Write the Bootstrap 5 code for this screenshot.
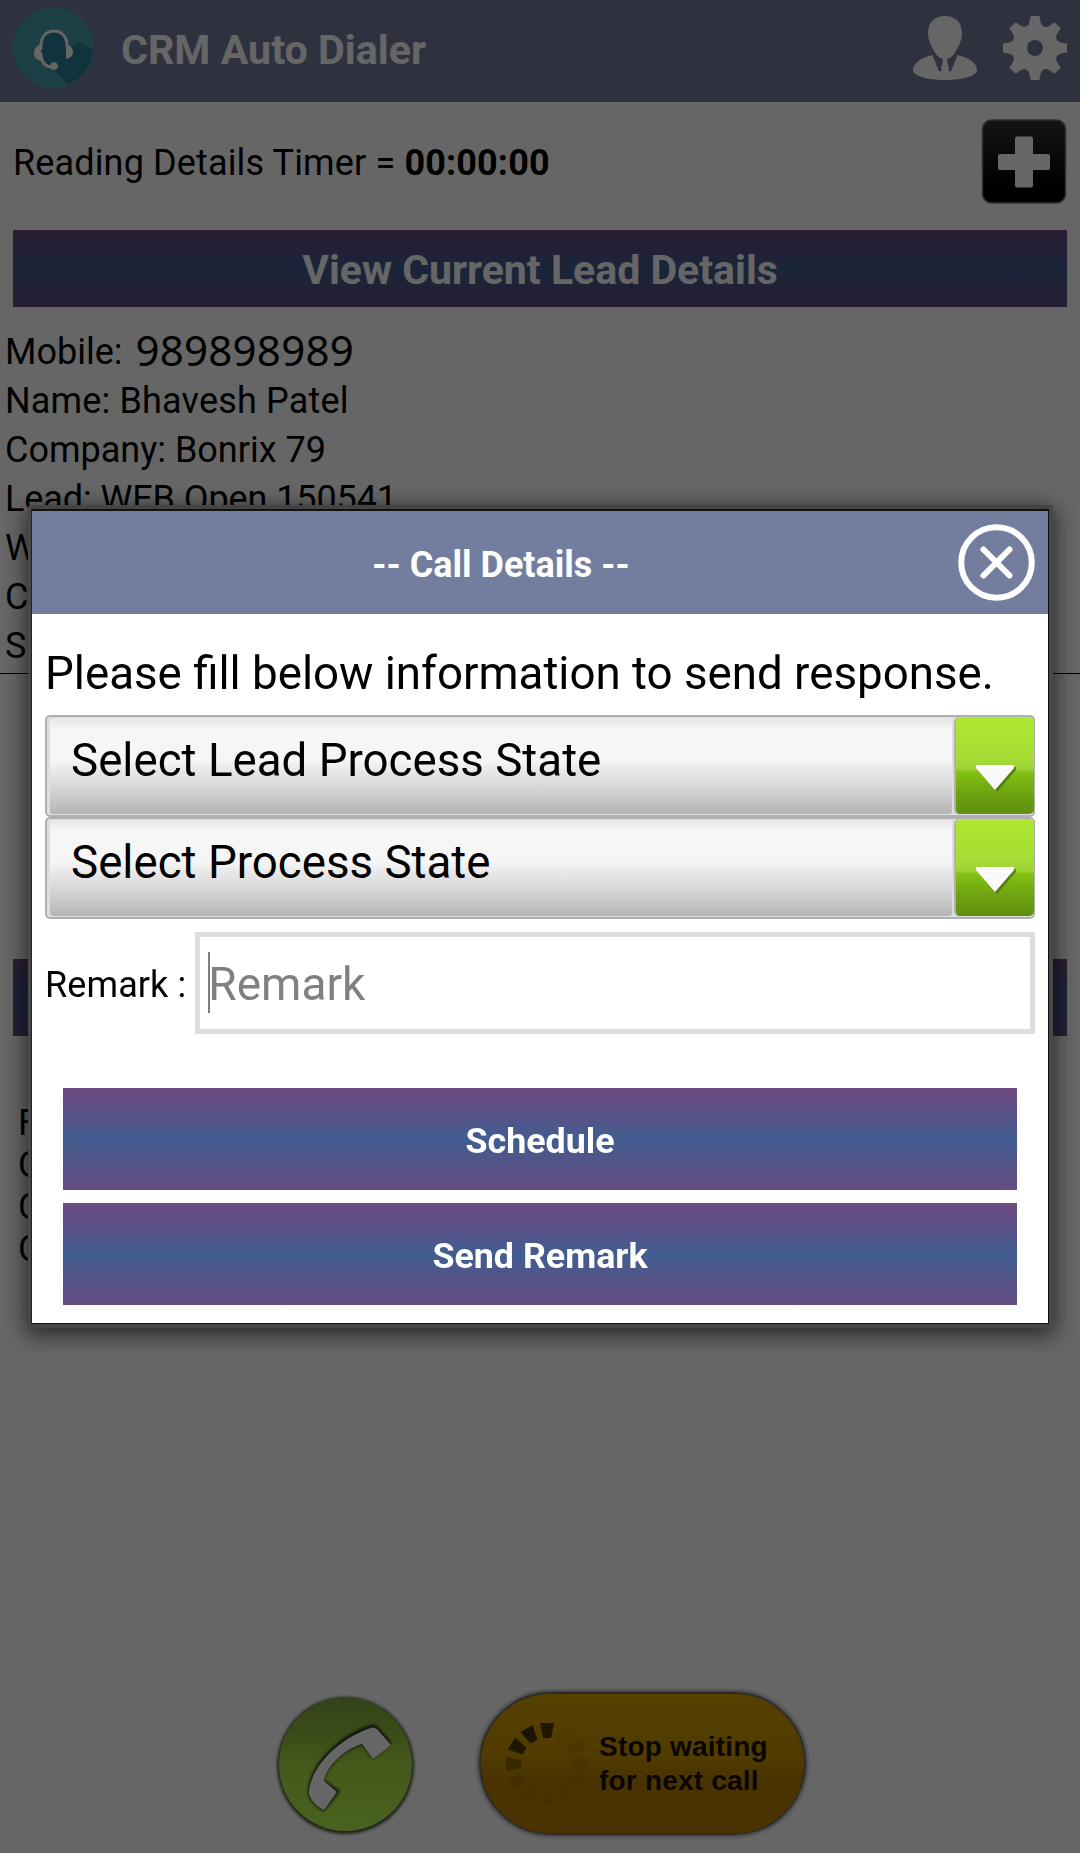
<!DOCTYPE html>
<html lang="en">
<head>
<meta charset="utf-8">
<meta name="viewport" content="width=device-width, initial-scale=1">
<title>CRM Auto Dialer</title>
<link href="https://cdn.jsdelivr.net/npm/bootstrap@5.3.0/dist/css/bootstrap.min.css" rel="stylesheet">
<style>
  body { font-family: Roboto, "Noto Sans", sans-serif; color: #000; background: #fff; height: 1853px; overflow: hidden; font-size: 36px; }
  .screen { height: 1853px; }
  .topbar { height: 102px; background: #737e9f; padding: 0 13px 7px; }
  .app-title { font-size: 41.2px; font-weight: 700; color: #fff; margin-left: 26px; line-height: 88px; padding-top: 4px; }
  .top-icons { gap: 26px; }
  .timer-row { height: 128px; padding: 0 13px 0 13px; }
  .timer-text { padding-bottom: 7px; letter-spacing: .14px; }
  .plus-icon { margin-bottom: 11px; }
  .grad-btn { background: linear-gradient(#6e4b80, #585187 25%, #415d90 50%, #555387 76%, #654e82); border-radius: 0; border: 0; color: #fff; font-weight: 700; }
  .wide-btn { height: 77px; margin: 0 13px; font-size: 41px; line-height: 77px; padding: 2px 0 0; }
  .lead-list { padding: 21px 0 0 5px; height: 367px; border-bottom: 1px solid #000; line-height: 49px; }
  .mobile-no { font-family: "Noto Sans", sans-serif; font-size: 42px; line-height: 40px; margin: -5px 0 0 13px; letter-spacing: .25px; }
  .airy { letter-spacing: .16px; }
  .tight { letter-spacing: -.1px; }
  .second-btn { margin-top: 285px; }
  .stats { padding: 66px 0 0 18px; line-height: 42px; }
  .bottom-bar { margin-top: auto; height: 165px; padding-left: 274px; gap: 61px; }
  .wait-btn { font-family: "Liberation Sans", Arial, sans-serif; font-weight: 700; font-size: 28px; line-height: 34px; width: 327px; height: 143px; margin-top: 4px; border-radius: 72px; border: 2px solid #716e64; background: linear-gradient(#d8a200 0%, #c99400 45%, #b88000 62%, #b88000); box-shadow: 0 0 5px #444; color: #1a1200; padding: 0 0 0 23px; gap: 9px; letter-spacing: .2px; }
  .modal-backdrop.dim { opacity: .6; }
  .modal-dialog.calldlg { max-width: 1025px; width: 1025px; margin: 505px 0 0 28px; }
  .calldlg .modal-content { border: 4px solid #484848; border-top-color: #444; border-radius: 3px; box-shadow: 0 5px 22px 2px rgba(0,0,0,.62); background: #fff; color: #000; }
  .dlg-inner { border: 1px solid #111; border-top-width: 2px; border-left-width: 0; box-shadow: -1px 0 0 #222; }
  .calldlg .modal-header { height: 103px; background: #737e9e; border: 0; border-radius: 0; padding: 0 13px 1px 12px; color: #fff; }
  .calldlg .modal-title { font-size: 36px; font-weight: 700; line-height: 60px; padding-top: 6px; }
  .calldlg .modal-body { padding: 25px 13px 18px; height: 709px; }
  .prompt { font-size: 45.7px; line-height: 69px; margin-bottom: 7px; }
  .spinner-box { height: 102px; font-size: 45.7px; border: 2px solid #b0b0b0; border-radius: 5px; background: #dedede; padding: 1px 0 1px 3px; }
  .spin-label { background: linear-gradient(#e6e6e6 0, #f6f6f6 12%, #f6f6f6 43%, #e8e8e8 55%, #d6d6d6 72%, #c6c6c6 86%, #b4b4b4); border-radius: 3px; padding: 0 0 9px 21px; margin-right: 2px; }
  .spin-arrow { width: 80px; margin: -1px -1px 0 0; border-left: 2px solid #b0b0b0; border-radius: 5px; background: linear-gradient(#afe82f 0, #a6dd35 40%, #9fd238 53%, #82c012 57%, #6fa411 78%, #5f8f0e); padding: 47px 0 0 19px; }
  .remark-row { margin-top: 13px; height: 102px; gap: 9px; }
  .remark-label { padding-top: 4px; letter-spacing: .1px; }
  .remark-box { border: 5px solid #ddd; padding: 3px 8px 0; font-size: 46px; color: #808080; }
  .caret { width: 2px; height: 61px; background: #808080; margin: -5px -2px 0 0; }
  .action-btn { height: 102px; font-size: 35.8px; line-height: 102px; padding: 2px 0 0; }
  .actions { margin: 54px 18px 0; gap: 13px; }
</style>
</head>
<body>
<div class="screen d-flex flex-column">
  <header class="topbar d-flex align-items-center">
    <svg width="82" height="82" viewBox="0 0 82 82">
      <circle cx="40.500" cy="41" r="40.500" fill="#48a0ac"/>
      <path d="M67 35 80 43A40.500 40.500 0 0 1 55 78L41 63 32 54Z" fill="#2c809c"/>
      <path d="M29 50V38c0-8 5-13 12-13s12 5 12 13v12l-12 10z" fill="#2c809c"/>
      <path d="M28 42v-3c0-9 5-15 13-15s13 6 13 15v3M28 46c0 9 4 14 12 14" fill="none" stroke="#fff" stroke-width="2.800"/>
      <path d="M28 37v17c-5-1-7-4-7-8s3-8 7-9zM53 37v15c4-1 7-3 7-7s-3-7-7-8z" fill="#fff"/>
      <circle cx="41" cy="59" r="3.800" fill="#fff"/>
    </svg>
    <div class="app-title">CRM Auto Dialer</div>
    <div class="top-icons d-flex ms-auto">
      <svg width="64" height="64" viewBox="0 0 64 64" fill="#fff">
        <path d="M32 0c11 0 17 7 17 17 0 9-5 16-8 21-2 3-5 5-9 5s-7-2-9-5c-3-5-8-12-8-21C15 7 21 0 32 0z"/>
        <path d="M20 39 27 55 30 45 29 42h6l-1 3 3 10 7-16c11 2 20 8 20 15 0 6-14 10-32 10S0 60 0 54c0-7 9-13 20-15z"/>
        <path d="M21 39l6.500 16M43 39l-6.500 16" stroke="#737e9f" stroke-width="3"/>
      </svg>
      <svg width="64" height="64" viewBox="-32 -32 64 64">
        <g fill="#fff">
          <circle r="23.500"/>
          <path id="cog" d="M-8-21Q-5-25-4.500-32h9Q5-25 8-21V21Q5 25 4.500 32h-9Q-5 25-8 21z"/>
          <use href="#cog" transform="rotate(45)"/><use href="#cog" transform="rotate(90)"/><use href="#cog" transform="rotate(135)"/>
        </g>
        <circle r="8" fill="#737e9f"/>
      </svg>
    </div>
  </header>
  <div class="timer-row d-flex align-items-center justify-content-between">
    <div class="timer-text">Reading Details Timer = <b>00:00:00</b></div>
    <svg class="plus-icon" width="86" height="86" viewBox="0 0 86 86">
      <defs><linearGradient id="pg" x2="0" y2="1"><stop offset="0" stop-color="#333"/><stop offset=".7" stop-color="#060606"/><stop offset="1" stop-color="#000"/></linearGradient></defs>
      <rect x="1.500" y="2" width="83" height="83" rx="9" fill="url(#pg)" stroke="#777" stroke-width="1.500"/>
      <path d="M36 18.500h14a2 2 0 0 1 2 2V36h15a2 2 0 0 1 2 2v12a2 2 0 0 1-2 2H52v15.500a2 2 0 0 1-2 2H36a2 2 0 0 1-2-2V52H19a2 2 0 0 1-2-2V38a2 2 0 0 1 2-2h15V20.500a2 2 0 0 1 2-2z" fill="#fff"/>
    </svg>
  </div>
  <button class="btn grad-btn wide-btn">View Current Lead Details</button>
  <div class="lead-list">
    <div class="d-flex align-items-center">Mobile: <span class="mobile-no">989898989</span></div>
    <div class="airy">Name: Bhavesh Patel</div>
    <div>Company: Bonrix 79</div>
    <div class="tight">Lead: WEB Open 150541</div>
    <div>W</div>
    <div>C</div>
    <div>S</div>
  </div>
  <div class="btn grad-btn wide-btn second-btn"></div>
  <div class="stats">
    <div>F</div>
    <div>C</div>
    <div>C</div>
    <div>C</div>
  </div>
  <div class="bottom-bar d-flex">
    <svg width="144" height="150" viewBox="0 0 144 150">
      <defs>
        <linearGradient id="cg" x2="0" y2="1"><stop offset="0" stop-color="#80a93e"/><stop offset=".25" stop-color="#90bd3f"/><stop offset=".5" stop-color="#aadf42"/><stop offset="1" stop-color="#b8f552"/></linearGradient>
        <filter id="soft" x="-10%" y="-10%" width="120%" height="120%"><feGaussianBlur stdDeviation="1.500"/></filter>
      </defs>
      <circle cx="71.500" cy="77.500" r="68.500" fill="#4c5a38" filter="url(#soft)"/>
      <circle cx="71.500" cy="76.500" r="66.500" fill="url(#cg)"/>
      <path d="M97 37C99 36 101 37 103 38L118 55 99 71 88 57C70 62 53 79 50 92L66 103 50 123C43 120 37 114 34 107 33 77 66 46 97 37z" fill="#222b12" filter="url(#soft)"/>
      <path d="M97 40C99 39 101 40 103 41L117 57 99 71 88 56C70 61 52 79 50 93L63 104 50 122C43 119 37 113 35 106 35 79 67 49 97 40z" fill="#fff"/>
    </svg>
    <button class="wait-btn d-flex align-items-center text-start">
      <svg width="86" height="86" viewBox="-43 -43 86 86" fill="#241800">
        <defs><path id="seg" d="M-7-41H7L4-26H-4z"/></defs>
        <use href="#seg" opacity=".75"/>
        <use href="#seg" transform="rotate(-30)" opacity=".8"/>
        <use href="#seg" transform="rotate(-60)" opacity=".75"/>
        <use href="#seg" transform="rotate(-90)" opacity=".35"/>
        <use href="#seg" transform="rotate(-120)" opacity=".1"/>
        <use href="#seg" transform="rotate(-150)" opacity=".06"/>
        <use href="#seg" transform="rotate(180)" opacity=".07"/>
        <use href="#seg" transform="rotate(150)" opacity=".07"/>
        <use href="#seg" transform="rotate(120)" opacity=".07"/>
        <use href="#seg" transform="rotate(90)" opacity=".09"/>
        <use href="#seg" transform="rotate(60)" opacity=".09"/>
        <use href="#seg" transform="rotate(30)" opacity=".04"/>
      </svg>
      <span>Stop waiting<br>for next call</span>
    </button>
  </div>
</div>

<div class="modal-backdrop dim"></div>
<div class="modal d-block" tabindex="-1">
  <div class="modal-dialog calldlg">
    <div class="modal-content">
      <div class="dlg-inner">
        <div class="modal-header">
          <div class="modal-title flex-grow-1 text-center">-- Call Details --</div>
          <svg width="77" height="77" viewBox="0 0 77 77" fill="none" stroke="#fff" stroke-width="6" stroke-linecap="round">
            <circle cx="38.500" cy="38.500" r="35.300"/>
            <path d="M25.500 25.500 51.500 51.500M51.500 25.500 25.500 51.500"/>
          </svg>
        </div>
        <div class="modal-body">
          <div class="prompt">Please fill below information to send response.</div>
          <div class="spinner-box d-flex">
            <div class="spin-label flex-grow-1 d-flex align-items-center">Select Lead Process State</div>
            <div class="spin-arrow"><svg class="d-block" width="42" height="30" viewBox="0 0 42 30"><path d="M3 3h38v3L22 28z" fill="#456a10" opacity=".7"/><path d="M1 1h38v3L20 26 1 4z" fill="#fafafa"/></svg></div>
          </div>
          <div class="spinner-box d-flex">
            <div class="spin-label flex-grow-1 d-flex align-items-center">Select Process State</div>
            <div class="spin-arrow"><svg class="d-block" width="42" height="30" viewBox="0 0 42 30"><path d="M3 3h38v3L22 28z" fill="#456a10" opacity=".7"/><path d="M1 1h38v3L20 26 1 4z" fill="#fafafa"/></svg></div>
          </div>
          <div class="remark-row d-flex align-items-center">
            <div class="remark-label">Remark :</div>
            <div class="remark-box flex-grow-1 h-100 d-flex align-items-center"><span class="caret"></span>Remark</div>
          </div>
          <div class="actions d-flex flex-column">
            <button class="btn grad-btn action-btn">Schedule</button>
            <button class="btn grad-btn action-btn">Send Remark</button>
          </div>
        </div>
      </div>
    </div>
  </div>
</div>
<script src="https://cdn.jsdelivr.net/npm/bootstrap@5.3.0/dist/js/bootstrap.bundle.min.js"></script>
</body>
</html>
